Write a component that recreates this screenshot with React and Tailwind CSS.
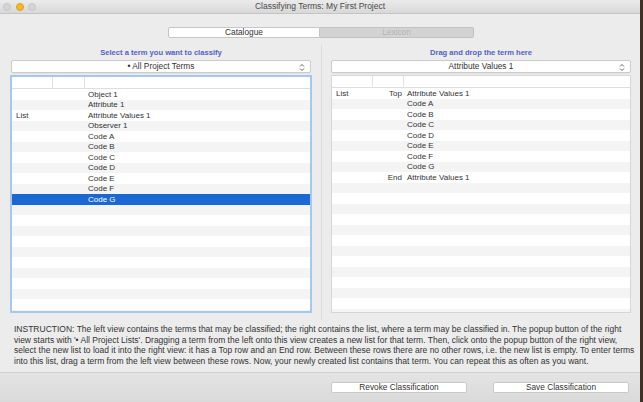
import React from 'react';

const leftRows = [
  { a: '', c: 'Object 1' },
  { a: '', c: 'Attribute 1' },
  { a: 'List', c: 'Attribute Values 1' },
  { a: '', c: 'Observer 1' },
  { a: '', c: 'Code A' },
  { a: '', c: 'Code B' },
  { a: '', c: 'Code C' },
  { a: '', c: 'Code D' },
  { a: '', c: 'Code E' },
  { a: '', c: 'Code F' },
  { a: '', c: 'Code G', selected: true },
];

const rightRows = [
  { a: 'List', b: 'Top', c: 'Attribute Values 1' },
  { a: '', b: '', c: 'Code A' },
  { a: '', b: '', c: 'Code B' },
  { a: '', b: '', c: 'Code C' },
  { a: '', b: '', c: 'Code D' },
  { a: '', b: '', c: 'Code E' },
  { a: '', b: '', c: 'Code F' },
  { a: '', b: '', c: 'Code G' },
  { a: '', b: 'End', c: 'Attribute Values 1' },
];

const TOTAL_ROWS = 22;

const Chevrons = () => (
  <svg width="6" height="9" viewBox="0 0 6 9" className="absolute right-[5px] top-[2px]">
    <path d="M1 3.5 L3 1.5 L5 3.5" fill="none" stroke="#555" strokeWidth="0.9" />
    <path d="M1 5.5 L3 7.5 L5 5.5" fill="none" stroke="#555" strokeWidth="0.9" />
  </svg>
);

const Popup = ({ label }) => (
  <div className="relative h-[13px] bg-white border border-[#cbcbcb] rounded-[2px] flex items-center justify-center text-[8.3px] text-[#333] shadow-[0_0.5px_0.5px_rgba(0,0,0,0.08)]">
    {label}
    <Chevrons />
  </div>
);

const Table = ({ rows, focused, cols }) => {
  const filled = [...rows];
  while (filled.length < TOTAL_ROWS) filled.push({ a: '', b: '', c: '' });
  return (
    <div
      className={`h-[238px] bg-white overflow-hidden flex flex-col ${
        focused ? 'border-2 border-[#a5c8f0]' : 'border border-[#d6d6d6] mx-[1px]'
      }`}
    >
      <div className="h-[12px] shrink-0 flex border-b border-[#dedede] bg-white">
        <div className={`${cols[0]} border-r border-[#e2e2e2]`} />
        <div className={`${cols[1]} border-r border-[#e2e2e2]`} />
        <div className="flex-1" />
      </div>
      {filled.map((r, i) => (
        <div
          key={i}
          className={`h-[10.5px] shrink-0 flex items-center pt-[1px] text-[8px] leading-none ${
            r.selected ? 'bg-[#1b68d3] text-white' : i % 2 === 0 ? 'bg-white text-[#333]' : 'bg-[#f4f4f4] text-[#333]'
          }`}
        >
          <div className={`${cols[0]} pl-[4px]`}>{r.a}</div>
          <div className={`${cols[1]} text-right pr-[2px]`}>{r.b}</div>
          <div className="flex-1 pl-[3px]">{r.c}</div>
        </div>
      ))}
    </div>
  );
};

const App = () => {
  return (
    <div className="w-[643px] h-[402px] flex bg-[#4a3b2c] overflow-hidden" style={{ fontFamily: '"Liberation Sans", Arial, sans-serif' }}>
      <div className="w-[640px] h-[402px] flex flex-col bg-[#ececec]">
        {/* title bar */}
        <div className="h-[14px] shrink-0 relative flex items-center justify-center bg-gradient-to-b from-[#ebebeb] to-[#d8d8d8] border-b border-[#c4c4c4]">
          <div className="absolute left-[3px] top-[3px] flex gap-[4.5px]">
            <span className="w-[8px] h-[8px] rounded-full bg-[#d5d5d5] border border-[#c6c6c6]" />
            <span className="w-[8px] h-[8px] rounded-full bg-[#f6b728] border border-[#e0a020]" />
            <span className="w-[8px] h-[8px] rounded-full bg-[#d5d5d5] border border-[#c6c6c6]" />
          </div>
          <span className="text-[8.5px] text-[#4a4a4a]">Classifying Terms: My First Project</span>
        </div>

        {/* segmented control */}
        <div className="mt-[13px] h-[11px] shrink-0 flex pl-[168px]">
          <div className="w-[152px] h-[11px] bg-white border border-[#c6c6c6] rounded-l-[2px] flex items-center justify-center text-[8.3px] text-[#333]">
            Catalogue
          </div>
          <div className="w-[154px] h-[11px] bg-[#d3d3d3] border border-l-0 border-[#c2c2c2] rounded-r-[2px] flex items-center justify-center text-[8.3px] text-[#b3b3b3]">
            Lexicon
          </div>
        </div>

        {/* panes */}
        <div className="mt-[7px] flex pl-[10px] shrink-0">
          <div className="w-[302px] flex flex-col">
            <div className="h-[15px] flex items-center justify-center text-[7.6px] font-bold text-[#5461c2]">
              Select a term you want to classify
            </div>
            <div className="px-[1px]">
              <Popup label="• All Project Terms" />
            </div>
            <div className="mt-[2px]">
              <Table rows={leftRows} focused cols={['w-[41px]', 'w-[32px]']} />
            </div>
          </div>
          <div className="w-[19px] flex justify-center">
            <div className="w-[1px] h-[275px] bg-[#dcdcdc]" />
          </div>
          <div className="w-[300px] flex flex-col">
            <div className="h-[15px] flex items-center justify-center text-[7.6px] font-bold text-[#5461c2]">
              Drag and drop the term here
            </div>
            <Popup label="Attribute Values 1" />
            <div className="mt-[2px] -mx-[1px]">
              <Table rows={rightRows} cols={['w-[41px]', 'w-[31px]']} />
            </div>
          </div>
        </div>

        {/* instruction */}
        <div className="mt-[4px] pl-[14px] text-[8.5px] leading-[10.6px] text-[#333] whitespace-nowrap">
          <div>INSTRUCTION: The left view contains the terms that may be classified; the right contains the list, where a term may be classified in. The popup button of the right</div>
          <div>view starts with '• All Project Lists'. Dragging a term from the left onto this view creates a new list for that term. Then, click onto the popup button of the right view,</div>
          <div>select the new list to load it into the right view: it has a Top row and an End row. Between these rows there are no other rows, i.e. the new list is empty. To enter terms</div>
          <div>into this list, drag a term from the left view between these rows. Now, your newly created list contains that term. You can repeat this as often as you want.</div>
        </div>

        {/* bottom bar */}
        <div className="mt-auto h-[30px] shrink-0 bg-gradient-to-b from-[#e4e4e4] to-[#dadada] border-t border-[#d2d2d2] flex items-start pt-[9px] pl-[331px] gap-[26px]">
          <div className="w-[136px] h-[11px] bg-white border border-[#c9c9c9] rounded-[2px] flex items-center justify-center text-[8.3px] text-[#333]">
            Revoke Classification
          </div>
          <div className="w-[136px] h-[11px] bg-white border border-[#c9c9c9] rounded-[2px] flex items-center justify-center text-[8.3px] text-[#333]">
            Save Classification
          </div>
        </div>
      </div>
      <div className="flex-1 bg-[#3e3226]" />
    </div>
  );
};

export default App;
